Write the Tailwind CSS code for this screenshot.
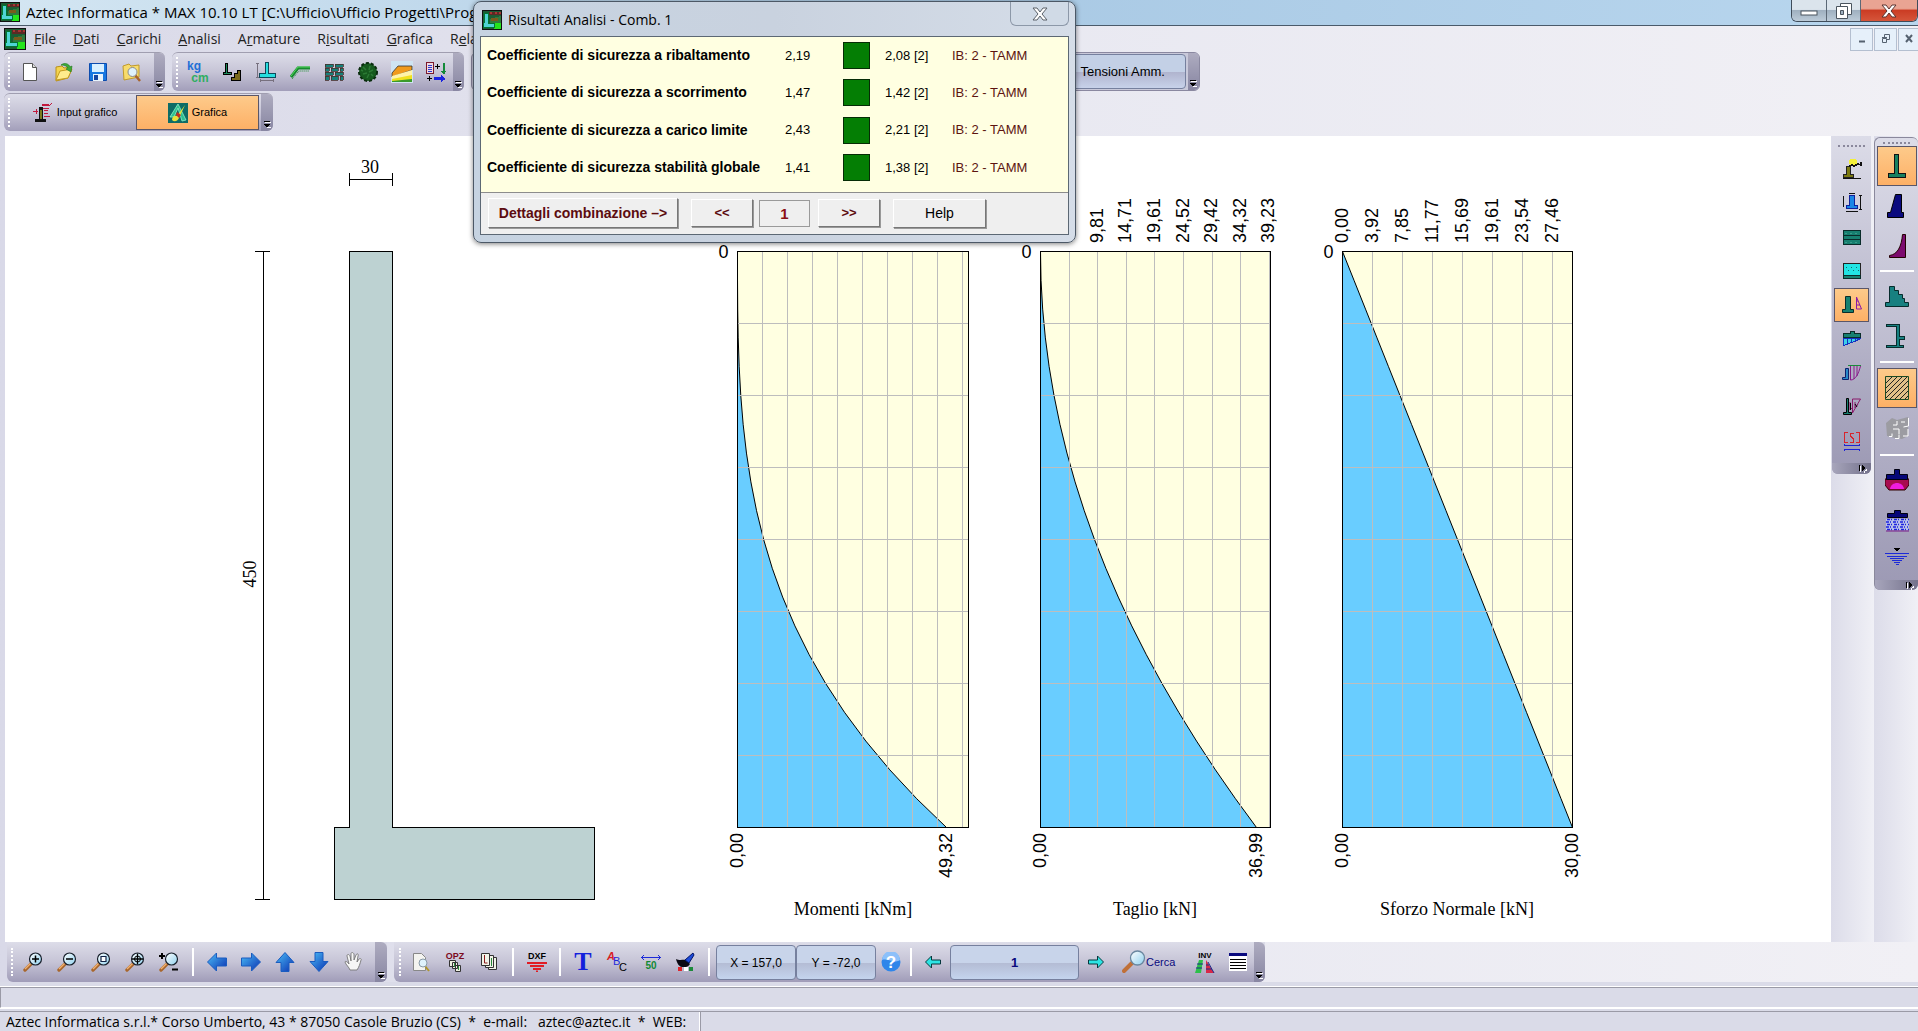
<!DOCTYPE html>
<html lang="it">
<head>
<meta charset="utf-8">
<title>Aztec Informatica * MAX 10.10 LT</title>
<script src="https://cdn.jsdelivr.net/npm/@tailwindcss/browser@4"></script>
</head>
<body class="relative flex min-h-screen flex-col overflow-x-hidden bg-linear-to-r from-[#d9d9e8] via-[#e8e8f1] to-[#f1f0f5] font-['Liberation_Sans',sans-serif] text-[13px] text-black">

<svg class="absolute size-0" aria-hidden="true">
  <defs>
    <symbol id="app" viewBox="0 0 20 20" shape-rendering="crispEdges">
      <rect width="20" height="20" fill="#111"/><rect x="1" y="1" width="18" height="18" fill="#1c5c34"/>
      <rect x="7" y="2" width="12" height="3" fill="#5b2a24"/><path d="M8 2h2v2h-2zM13 2h2v2h-2zM17 2h2v2h-2z" fill="#a33"/>
      <path d="M8 9l11-3v7H8z" fill="#2f7a3c"/><path d="M9 8h7v3h-7z" fill="#7a5a1c"/>
      <rect x="12" y="13" width="7" height="6" fill="#25e41c"/>
      <path d="M2 3h4v10h6v4H1V14l1-1z" fill="#4fd4d4" stroke="#073" stroke-width="1"/>
    </symbol>
    <symbol id="more" viewBox="0 0 9 9" shape-rendering="crispEdges">
      <path d="M2 2h6v1H2zM3 7h5v1H5v1z" fill="#fff"/><path d="M1 1h6v1H1zM1 4h6v1H6v1H5v1H3V6H2V5H1z"/>
    </symbol>
    <symbol id="moreside" viewBox="0 0 9 9" shape-rendering="crispEdges">
      <path d="M2 2h1v6H2zM6 7h1v-1h1v-1h1v2h-2v2h-1z" fill="#fff"/><path d="M1 1h1v6H1zM4 1h1v1h1v1h1v2H6v1H5v1H4z"/>
    </symbol>
    <linearGradient id="blu" x1="0" y1="0" x2="1" y2="1"><stop offset="0" stop-color="#4cc0f8"/><stop offset="1" stop-color="#0a2fb0"/></linearGradient>
    <linearGradient id="lens" x1="0" y1="0" x2="1" y2="1"><stop offset="0" stop-color="#fff"/><stop offset="1" stop-color="#8fd0ee"/></linearGradient>
    <symbol id="mag" viewBox="0 0 20 20">
      <path d="M2 18l7-7" stroke="#a8662c" stroke-width="3.4" stroke-linecap="round"/><path d="M2 17l6-6" stroke="#f0b070" stroke-width="1.4"/>
      <circle cx="12.500" cy="7" r="6" fill="url(#lens)" stroke="#18202c" stroke-width="1.2"/>
    </symbol>
  </defs>
</svg>

<!-- Title bar -->
<header class="flex h-[26px] items-start justify-between border-b border-[#4a5a6a] bg-linear-to-r from-[#d4e6f2] via-[#a9c9e4] to-[#b8d6ee]">
  <div class="flex items-center gap-1.5 pt-0.5">
    <svg class="size-5"><use href="#app"/></svg>
    <h1 class="whitespace-nowrap font-['Open_Sans',sans-serif] text-[15px] leading-5">Aztec Informatica * MAX 10.10 LT [C:\Ufficio\Ufficio Progetti\Progetti</h1>
  </div>
  <div class="flex h-[22px] overflow-hidden rounded-b-md border border-t-0 border-[#3f4c5a]">
    <button aria-label="Riduci a icona" class="flex w-[35px] items-center justify-center border-r border-[#5b6876] bg-linear-to-b from-[#dbe4ec] from-45% via-[#9fb0c0] via-50% to-[#bccbd8]"><svg class="size-[18px]"><rect x="1" y="9" width="16" height="4" fill="#fff" stroke="#4a545e"/></svg></button>
    <button aria-label="Ripristina" class="flex w-[34px] items-center justify-center border-r border-[#5b6876] bg-linear-to-b from-[#dbe4ec] from-45% via-[#9fb0c0] via-50% to-[#bccbd8]"><svg class="size-[18px]" fill="#fff" stroke="#4a545e"><path d="M5.500 1.500h11v11h-11z"/><path d="M1.500 4.500h11v12h-11z"/><path d="M5.500 8.500h3v4h-3z" fill="#9fb0c0"/></svg></button>
    <button aria-label="Chiudi" class="flex w-[56px] items-center justify-center bg-linear-to-b from-[#e9a493] from-40% via-[#cb3c24] via-50% to-[#d5553a]"><svg class="h-4 w-[18px]" viewBox="0 0 18 16"><path d="M2 2h4l3 4 3-4h4l-5 6 5 6h-4l-3-4-3 4H2l5-6z" fill="#fff" stroke="#5c3430"/></svg></button>
  </div>
</header>

<!-- Menu bar -->
<nav class="flex h-[26px] items-center justify-between font-['Open_Sans',sans-serif] text-[14px] text-[#222]">
  <div class="flex items-center whitespace-nowrap pl-1">
    <svg class="size-[22px]"><use href="#app"/></svg>
    <div class="flex gap-[17px] pl-2 leading-5">
      <a href="#"><u>F</u>ile</a><a href="#"><u>D</u>ati</a><a href="#"><u>C</u>arichi</a><a href="#"><u>A</u>nalisi</a><a href="#">A<u>r</u>mature</a><a href="#">R<u>i</u>sultati</a><a href="#"><u>G</u>rafica</a><a href="#">R<u>e</u>lazione</a>
    </div>
  </div>
  <div class="flex gap-px">
    <button aria-label="Riduci finestra" class="flex h-[23px] w-[23px] items-center justify-center border border-[#b4bfd0] bg-[#e6f0fa]"><svg class="size-3"><path d="M3 8.500h6" stroke="#566270" stroke-width="2"/></svg></button>
    <button aria-label="Ripristina finestra" class="flex h-[23px] w-[23px] items-center justify-center border border-[#b4bfd0] bg-[#e6f0fa]"><svg class="size-3" fill="none" stroke="#566270"><path d="M4.500 4V1.500h5v5H7M2.500 5.500h4v4h-4zM2 4.500h5"/></svg></button>
    <button aria-label="Chiudi finestra" class="flex h-[23px] w-[20px] items-center justify-center border border-r-0 border-[#b4bfd0] bg-[#e6f0fa]"><svg class="size-3"><path d="M3 2l6 7M9 2l-6 7" stroke="#566270" stroke-width="2"/></svg></button>
  </div>
</nav>

<!-- Tool bars -->
<div class="flex h-[39px] gap-[7px] pl-1">
  <div class="flex w-[161px] overflow-hidden rounded-md border-t border-[#a09eb0] bg-linear-to-b from-[#dddde9] via-[#c6c4d6] to-[#a29eba]">
    <span class="my-1 ml-1 w-[5px] border-l-2 border-dotted border-white"></span>
    <button aria-label="Nuovo" class="flex w-[34px] items-center justify-center"><svg class="size-5"><path d="M3.500 1.500h9l4 4v13h-13z" fill="#fff" stroke="#555"/><path d="M12.500 1.500v4h4" fill="#ddd" stroke="#555"/></svg></button>
    <button aria-label="Apri" class="flex w-[34px] items-center justify-center"><svg class="size-5"><path d="M2 5l6-1 2 2 7-1v4l-3 7-12 3z" fill="#f4d44e" stroke="#b8901c"/><path d="M2 18l4-9 12-2-4 9z" fill="#ffec8c" stroke="#c49a20"/><path d="M7 3c4-3 8-1 9 2l2-1-1 6-5-3 2-1c-1-2-4-3-7-3z" fill="#3faa38" stroke="#1c7a24" stroke-width=".6"/></svg></button>
    <button aria-label="Salva" class="flex w-[34px] items-center justify-center"><svg class="size-5"><path d="M1.500 1.500h17v17h-17z" fill="#1878e0" stroke="#0c4cae"/><path d="M4 2h12v8H4z" fill="#d8f0ff"/><path d="M5 12h10v7H5z" fill="#e8f4fc"/><path d="M6 13h4v5H6z" fill="#1646a0"/></svg></button>
    <button aria-label="Cerca file" class="flex w-[34px] items-center justify-center"><svg class="size-5"><path d="M1 4l6-2 2 2 8-1v12l-15 3z" fill="#f8dc6c" stroke="#c09a2c"/><path d="M13 13l5 6" stroke="#a8642c" stroke-width="2.500"/><circle cx="10.500" cy="10" r="4.500" fill="#dff2fc" stroke="#8a8a8a"/></svg></button>
    <span class="ml-auto flex w-[11px] items-end justify-center bg-linear-to-b from-[#aeacc0] to-[#8886a2] pb-0.5"><svg class="size-[9px]"><use href="#more"/></svg></span>
  </div>
  <div class="flex w-[292px] overflow-hidden rounded-md border-t border-[#a09eb0] bg-linear-to-b from-[#dddde9] via-[#c6c4d6] to-[#a29eba]">
    <span class="my-1 ml-1 w-[5px] border-l-2 border-dotted border-white"></span>
    <button aria-label="Unità di misura" class="flex w-[34px] flex-col items-center justify-center text-[12px] leading-[12px] font-bold"><span class="pr-2 text-[#1f6fd6]">kg</span><span class="pl-1 text-[#2fae62]">cm</span></button>
    <button aria-label="Tipo muro" class="flex w-[34px] items-center justify-center"><svg class="size-5" stroke="#000" shape-rendering="crispEdges"><path d="M3.500 1.500h2v9h4v2h-8v-2h2z" fill="#1a8a5a"/><path d="M15.500 8.500h3v10h-9v-3h3v-4h3z" fill="#7a6a1c"/></svg></button>
    <button aria-label="Geometria" class="flex w-[34px] items-center justify-center"><svg class="size-5" shape-rendering="crispEdges"><path d="M9.500 .500h3v11h7v4h-16v-4h6z" fill="#27dede" stroke="#0b4a5a"/><path d="M1.500 1v15M0 1.500h3M0 15.500h3M4 18.500h14M4.500 17v3M17.500 17v3" stroke="#77707e"/></svg></button>
    <button aria-label="Profilo" class="flex w-[34px] items-center justify-center"><svg class="size-5"><path d="M1 15l7-9h12" fill="none" stroke="#168a2e" stroke-width="3"/><path d="M1 14l7-9h12" fill="none" stroke="#54d85e"/><path d="M2 17l7-8h10" fill="none" stroke="#168a2e" stroke-dasharray="1 1"/></svg></button>
    <button aria-label="Strati" class="flex w-[34px] items-center justify-center"><svg class="size-5" shape-rendering="crispEdges"><path d="M1 2h8v3H1zM11 2h8v3h-8zM1 6h4v3H1zM7 6h7v3H7zM16 6h3v3h-3zM1 10h8v3H1zM11 10h8v3h-8zM1 14h4v4H1zM7 14h7v4H7zM16 14h3v4h-3z" fill="#15807a" stroke="#46302c" stroke-width=".8"/></svg></button>
    <button aria-label="Vegetazione" class="flex w-[34px] items-center justify-center"><svg class="size-5"><circle cx="10" cy="10" r="9" fill="#165a1e" stroke="#0a2c0e" stroke-dasharray="3 2" stroke-width="2"/><path d="M5 5l3 3M12 4l-1 4M15 8l-4 2M5 12l4-1M9 16l2-4M15 14l-2-2M3 8l2 1" stroke="#2c7a34" stroke-width="1.500"/></svg></button>
    <button aria-label="Terreno" class="flex w-[34px] items-center justify-center"><svg class="size-[22px]"><path d="M0 0h22v22H0z" fill="#cfe4f2"/><path d="M1 12l6-7h14v4L1 16z" fill="#f09a1c" stroke="#333" stroke-width=".8"/><path d="M1 15l20-6v6L1 18z" fill="#fff3a8"/><path d="M1 18l20-4v6H1z" fill="#f2e21e"/><path d="M1 20l20-2v3H1z" fill="#3b9a2c"/></svg></button>
    <button aria-label="Carichi" class="flex w-[34px] items-center justify-center"><svg class="size-5" shape-rendering="crispEdges"><path d="M.5 .5h7v11h-7z" fill="#f2d8e0" stroke="#7a1a2c"/><path d="M2 3h4M2 5h4M2 7h4M2 9h4" stroke="#2a3ad0"/><path d="M9 4.500h5M11.500 2v5M1 16.500h5M3.500 14v5" stroke="#000"/><path d="M17 1v8h-2l3 4 2-4h-1V1z" fill="#138a3a"/><path d="M8 15h7v-2l5 4-5 3v-2H8z" fill="#1a22e0"/></svg></button>
    <span class="ml-auto flex w-[11px] items-end justify-center bg-linear-to-b from-[#aeacc0] to-[#8886a2] pb-0.5"><svg class="size-[9px]"><use href="#more"/></svg></span>
  </div>
  <div class="flex w-[729px] justify-end overflow-hidden rounded-md border border-[#8a88a0] bg-[#c9c9da]">
    <button class="my-px mr-0.5 w-[200px] rounded-sm border border-[#76809e] bg-linear-to-b from-[#c3d0e6] from-50% via-[#b0b4ce] via-52% to-[#c8d2ea] pr-5 text-right">Tensioni Amm.</button>
    <span class="flex w-[11px] items-end justify-center bg-linear-to-b from-[#aeacc0] to-[#8886a2] pb-0.5"><svg class="size-[9px]"><use href="#more"/></svg></span>
  </div>
</div>
<div class="flex pt-0.5 pb-[5px] pl-1">
  <div class="flex h-[38px] w-[269px] overflow-hidden rounded-md border-t border-[#a09eb0] bg-linear-to-b from-[#dddde9] via-[#c6c4d6] to-[#a29eba] text-[11px]">
    <span class="my-1 ml-1 w-[6px] border-l-2 border-dotted border-white"></span>
    <button class="flex w-[122px] items-center justify-center gap-1"><svg class="size-5" shape-rendering="crispEdges"><path d="M6 4h4v12h3v3H2v-3h4z" fill="#111"/><path d="M7 7h2v9H7z" fill="#7a7a1c"/><path d="M9 1h7v2H9zM0 8h5M11 7h4v1h-4zM11 10h4v1h-4zM11 13h6v1h-6z" fill="#c2183c"/><path d="M0 8.500h5M3 6v5M10 5.500h6M19 0l-3 3" stroke="#c2183c"/></svg>Input grafico</button>
    <button class="my-px flex w-[123px] items-center justify-center gap-1 border border-[#5a5668] bg-linear-to-b from-[#fdca8a] to-[#fdb066]"><svg class="size-5"><path d="M0 0h20v20H0z" fill="#0e6c66"/><path d="M10 1L2 14h4l4-9 4 13 4-1z" fill="#2fc090" stroke="#8ff0c8" stroke-width=".8"/><path d="M4 17c0-4 3-5 5-4l8-11-6 13c-2 4-5 4-7 2z" fill="#e8e03a"/><path d="M9 9l4 3-2 3-3-3z" fill="#c03020"/></svg>Grafica</button>
    <span class="ml-auto flex w-[12px] items-end justify-center bg-linear-to-b from-[#aeacc0] to-[#8886a2] pb-0.5"><svg class="size-[9px]"><use href="#more"/></svg></span>
  </div>
</div>

<!-- Drawing area -->
<main class="flex flex-1">
  <div class="min-w-0 flex-1 pl-[5px]">
    <svg class="block h-full w-full bg-white" viewBox="5 136 1826 806" role="img" aria-label="Diagrammi delle sollecitazioni">
      <g stroke="#000" fill="none" shape-rendering="crispEdges">
        <path d="M349.500 251.500h43v576h202v72h-260v-72h15z" fill="#bdd2d2"/>
        <path d="M263.500 251.500v648M255 251.500h15M255 899.500h15M349.500 179.500h43M349.500 173v13M392.500 173v13"/>
      </g>
      <g font-family="'Liberation Serif',serif" font-size="18" text-anchor="middle">
        <text x="370" y="173">30</text>
        <text transform="translate(256 574) rotate(-90)">450</text>
        <text x="853" y="915">Momenti [kNm]</text><text x="1155" y="915">Taglio [kN]</text><text x="1457" y="915">Sforzo Normale [kN]</text>
      </g>
      <g id="charts" font-family="'Liberation Sans',sans-serif" font-size="18"></g>
    </svg>
  </div>
  <aside class="w-[43px] shrink-0 bg-linear-to-r from-[#dcdce9] to-[#f0f0f6]">
    <div class="ml-px flex h-[338px] w-[39px] flex-col items-center overflow-hidden rounded-b-md bg-linear-to-b from-[#dcdce8] to-[#9c99b4]">
      <span class="mt-[9px] h-[7px] w-[27px] shrink-0 border-t-2 border-dotted border-[#8a889c]"></span>
      <button aria-label="Sisma" class="flex h-[34px] w-[35px] items-center justify-center"><svg class="size-5" shape-rendering="crispEdges"><circle cx="11" cy="3" r="4" fill="#f4f03a"/><path d="M4 7h4v8h3v3H1v-3h3z" fill="#7c7a12" stroke="#222"/><path d="M7 7l3-1 2 1 4-2 3 1v-3M1 19.500h18" stroke="#111" stroke-width="1.500" fill="none"/></svg></button>
      <button aria-label="Quote" class="flex h-[34px] w-[35px] items-center justify-center"><svg class="size-5" shape-rendering="crispEdges"><path d="M7.500 2.500h5v10h3v3h-11v-3h3z" fill="#1a86e6" stroke="#10209c"/><path d="M1.500 3v11M18.500 2v15M17 2.500h3M17 16.500h3M7 .5h6M4 18.500h12" stroke="#111"/></svg></button>
      <button aria-label="Armatura" class="flex h-[34px] w-[35px] items-center justify-center"><svg class="size-5" shape-rendering="crispEdges"><path d="M1.500 3.500h17v14h-17zM1 8.500h18M1 12.500h18" fill="#178070" stroke="#0a2c2a"/><path d="M3 6h14M3 15h14" stroke="#3a9a8a" stroke-dasharray="2 3"/></svg></button>
      <button aria-label="Strato" class="flex h-[34px] w-[35px] items-center justify-center"><svg class="size-5" shape-rendering="crispEdges"><path d="M1.500 2.500h17v15h-17z" fill="#22e4e4" stroke="#222"/><path d="M1.500 14.500h17v3h-17z" fill="#178070" stroke="#0a2c2a"/><path d="M4 6h12M6 9h12" stroke="#176a70" stroke-dasharray="1 4"/></svg></button>
      <button aria-label="Sollecitazioni" class="flex h-[34px] w-[35px] items-center justify-center border border-[#5a5668] bg-linear-to-b from-[#fdca8a] to-[#fdb066]"><svg class="size-5"><path d="M3.500 1.500h5v13h3v3h-11v-3h3z" fill="#178070" stroke="#0a2c2a"/><path d="M14.500 2v12h5zM14 6h2M14 10h4" fill="none" stroke="#8a1aa8"/></svg></button>
      <button aria-label="Fondazione" class="flex h-[34px] w-[35px] items-center justify-center"><svg class="size-5" shape-rendering="crispEdges"><path d="M1.500 4.500h7v-2h4v2h6v4h-17z" fill="#178070" stroke="#0a2c2a"/><path d="M1.500 9.500h17l-6 3-11 4z" fill="#3ad0e8" stroke="#1430c0"/><path d="M5 10v5M9 10v4M13 10v3" stroke="#1430c0"/></svg></button>
      <button aria-label="Taglio" class="flex h-[34px] w-[35px] items-center justify-center"><svg class="size-5"><path d="M3.500 5.500h3v11h-6v-2h3z" fill="#2a8ac8" stroke="#10206c"/><path d="M8.500 3v14c5 0 8-6 10-14M12 3v13M15 3v10" fill="none" stroke="#8a1a8a"/><path d="M6 2.500h13" stroke="#1a8a3a"/></svg></button>
      <button aria-label="Momento" class="flex h-[34px] w-[35px] items-center justify-center"><svg class="size-5"><path d="M4.500 1.500h2v14h3v2h-8v-2h3z" fill="#178070" stroke="#000"/><path d="M10.500 2v14l8-14zM8 5v8l3-3M13 5v6l3-4" fill="none" stroke="#8a1a6a"/><path d="M8.500 6v7M13 7l2 3" stroke="#000"/></svg></button>
      <button aria-label="Sezione" class="flex h-[34px] w-[35px] items-center justify-center"><svg class="size-5" fill="none" shape-rendering="crispEdges"><path d="M6 1.500H2.500v10H6M14 1.500h3.500v10H14M12 2H8.500v3l3 3v3H8" stroke="#d8242c"/><path d="M3 14.500h14M3 18.500h14M2.500 13v2M17.500 13v2M2.500 18v2M17.500 18v2" stroke="#1a22d8"/></svg></button>
      <span class="mt-auto flex h-[11px] w-full shrink-0 items-center justify-end bg-linear-to-r from-[#a8a6bc] to-[#74728c] pr-1"><svg class="size-[9px]"><use href="#moreside"/></svg></span>
    </div>
  </aside>
  <aside class="w-[44px] shrink-0 bg-linear-to-r from-[#dcdce9] to-[#f0f0f6] pt-px">
    <div class="flex h-[453px] flex-col items-center overflow-hidden rounded-md border-t border-l border-[#8a889c] bg-linear-to-b from-[#dcdce8] to-[#9c99b4]">
      <span class="mt-1 h-1 w-[27px] shrink-0 border-t-2 border-dotted border-[#8a889c]"></span>
      <button aria-label="Muro a mensola" class="flex h-10 w-10 items-center justify-center border border-[#5a5668] bg-linear-to-b from-[#fdca8a] to-[#fdb066]"><svg class="size-6" shape-rendering="crispEdges"><path d="M9.500 .5h4v19h7v4h-17v-4h6z" fill="#178060" stroke="#111"/></svg></button>
      <button aria-label="Muro a gravità" class="flex h-10 w-10 items-center justify-center"><svg class="size-6"><path d="M10.500 .5h6v18h2v5h-16v-5h3z" fill="#0a0a7e" stroke="#000"/></svg></button>
      <button aria-label="Muro curvo" class="flex h-10 w-10 items-center justify-center"><svg class="size-6"><path d="M17.500 .5h3v23h-16v-2c8-1 12-9 13-21z" fill="#7c0a6e" stroke="#200"/></svg></button>
      <span class="my-1 h-0.5 w-[34px] shrink-0 bg-white"></span>
      <button aria-label="Muro a gradoni" class="flex h-10 w-10 items-center justify-center"><svg class="size-6"><path d="M4.500 2.500h5v4h4v4h4v4h2v4h4v4h-23v-4h4z" fill="#178080" stroke="#062c2c"/></svg></button>
      <button aria-label="Muro con mensola" class="flex h-10 w-10 items-center justify-center"><svg class="size-6" shape-rendering="crispEdges"><path d="M1.500 .5h13v12h5v3h-5v6h4v2h-17v-2h10v-19h-10z" fill="#178080" stroke="#062c2c"/></svg></button>
      <span class="my-[5px] h-0.5 w-[34px] shrink-0 bg-white"></span>
      <button aria-label="Tratteggio" class="flex h-10 w-10 items-center justify-center border border-[#5a5668] bg-linear-to-b from-[#fdca8a] to-[#fdb066]"><svg class="size-6"><path d="M.5 .5h23v23H.5z" fill="#e2c088" stroke="#1c4a24"/><path d="M1 7l6-6M1 12L12 1M1 17L17 1M1 22L22 1M5 23L23 5M10 23l13-13M15 23l8-8M20 23l3-3" stroke="#222"/></svg></button>
      <button aria-label="Pietrame" class="flex h-10 w-10 items-center justify-center"><svg class="size-6"><path d="M1 7l6-5 5 2 11-3v19l-6 3-7-1-8-2z" fill="#9c9ca2"/><path d="M23.500 2v8l-5 1M12 5v4H8M8 13h6v5M23 13v7h-5M10 22.500h4v-4M16 6h4M4 20.500h3v-3" stroke="#fff" fill="none"/></svg></button>
      <span class="mt-1.5 mb-1 h-0.5 w-[34px] shrink-0 bg-white"></span>
      <button aria-label="Pressioni" class="flex h-10 w-10 items-center justify-center"><svg class="size-6"><path d="M0 11h24v6l-4 5H4l-4-5z" fill="#a80c50" stroke="#300"/><path d="M5 21c1-8 13-8 14 0z" fill="#f01ce0"/><path d="M1.500 6.500h8v-5h5v5h8v5h-21z" fill="#060678" stroke="#001"/></svg></button>
      <button aria-label="Terreno fondazione" class="flex h-10 w-10 items-center justify-center"><svg class="size-6"><path d="M1 11h23v11H1z" fill="#b8c0e8"/><path d="M2 11.500h22M1 14h22M2 16.500h22M1 19h22M2 21.500h22" fill="none" stroke="#1c22e0" stroke-width="1.500" stroke-dasharray="3 1 1 2"/><path d="M2.500 5.500h7v-3h6v3h7v4h-20z" fill="#060678" stroke="#001"/><path d="M1 23h23" stroke="#7a1a8a"/></svg></button>
      <button aria-label="Falda" class="flex h-[34px] w-10 items-center justify-center"><svg class="size-6" shape-rendering="crispEdges"><path d="M9 3h6l-3 4z"/><path d="M0 8.500h24M2 11.500h20M5 13.500h14M7 15.500h10M9 17.500h6M11 19.500h3" stroke="#1c2ad8" stroke-width="1.400"/></svg></button>
      <span class="mt-auto flex h-[10px] w-full shrink-0 items-center justify-end bg-linear-to-r from-[#a8a6bc] to-[#74728c] pr-1"><svg class="size-[9px]"><use href="#moreside"/></svg></span>
    </div>
  </aside>
</main>

<!-- Bottom tool bars -->
<div class="flex h-10 gap-[7px] pl-[7px]">
  <div class="flex w-[380px] overflow-hidden rounded-b-md bg-linear-to-b from-[#dddde9] via-[#c6c4d6] to-[#a09cb8]">
    <span class="my-1.5 ml-1 w-[5px] shrink-0 border-l-2 border-dotted border-white"></span>
    <button aria-label="Zoom avanti" class="flex w-[34px] items-center justify-center"><svg class="size-5"><use href="#mag"/><path d="M9 7h7M12.500 3.500v7" stroke="#000" stroke-width="1.500"/></svg></button>
    <button aria-label="Zoom indietro" class="flex w-[34px] items-center justify-center"><svg class="size-5"><use href="#mag"/><path d="M9 7h7" stroke="#000" stroke-width="1.500"/></svg></button>
    <button aria-label="Zoom finestra" class="flex w-[34px] items-center justify-center"><svg class="size-5"><use href="#mag"/><path d="M10 4.500h5v5h-5z" fill="#fff" stroke="#124" stroke-width="1.200"/></svg></button>
    <button aria-label="Zoom tutto" class="flex w-[34px] items-center justify-center"><svg class="size-5"><use href="#mag"/><path d="M7 7h11M12.500 1.500v11" stroke="#000" stroke-width="1.300"/><circle cx="12.500" cy="7" r="3" fill="none" stroke="#000"/></svg></button>
    <button aria-label="Zoom dinamico" class="flex w-[34px] items-center justify-center"><svg class="size-5"><use href="#mag"/><path d="M0 4h6M3 1v6M13 17.500h6" stroke="#000" stroke-width="2"/></svg></button>
    <span class="mx-[6px] my-1.5 w-0.5 shrink-0 bg-white"></span>
    <button aria-label="Sinistra" class="flex w-[34px] items-center justify-center"><svg class="size-5"><path d="M.5 10l9-9v5h10v8h-10v5z" fill="url(#blu)" stroke="#1a5cc0"/></svg></button>
    <button aria-label="Destra" class="flex w-[34px] items-center justify-center"><svg class="size-5"><path d="M19.500 10l-9-9v5H.5v8h10v5z" fill="url(#blu)" stroke="#1a5cc0"/></svg></button>
    <button aria-label="Su" class="flex w-[34px] items-center justify-center"><svg class="size-5"><path d="M10 .5l9 10h-5v9H6v-9H1z" fill="url(#blu)" stroke="#1a5cc0"/></svg></button>
    <button aria-label="Giù" class="flex w-[34px] items-center justify-center"><svg class="size-5"><path d="M10 19.500l9-10h-5v-9H6v9H1z" fill="url(#blu)" stroke="#1a5cc0"/></svg></button>
    <button aria-label="Mano" class="flex w-[34px] items-center justify-center"><svg class="size-5"><path d="M7 18c-1-3-4-5-5-8 0-1 2-1 4 2L4 4c0-2 2-2 3 0l1 5V2c0-2 2-2 3 0v6l2-5c1-2 3-1 2 1l-1 6 2-3c1-1 3 0 2 1-1 4-2 7-4 10z" fill="#f6f6f6" stroke="#777" stroke-width=".9"/></svg></button>
    <span class="ml-auto flex w-[12px] items-end justify-center rounded-tr-md bg-linear-to-b from-[#aeacc0] to-[#8886a2] pb-0.5"><svg class="size-[9px]"><use href="#more"/></svg></span>
  </div>
  <div class="flex w-[871px] overflow-hidden rounded-b-md bg-linear-to-b from-[#dddde9] via-[#c6c4d6] to-[#a09cb8]">
    <span class="my-1.5 ml-[5px] w-[5px] shrink-0 border-l-2 border-dotted border-white"></span>
    <button aria-label="Anteprima" class="flex w-[34px] items-center justify-center"><svg class="size-5"><path d="M2.500 1.500h8l4 4v13h-12z" fill="#f4f4f0" stroke="#888"/><path d="M14 14l4 5" stroke="#b0962c" stroke-width="2"/><circle cx="12" cy="11" r="4" fill="#dff2fc" stroke="#8a9aa8"/></svg></button>
    <button aria-label="Opzioni" class="flex w-[34px] flex-col items-center justify-center text-[9px] leading-[8px] font-bold text-[#7c0a1c]">OPZ<svg class="h-3 w-4" fill="#eef0e0" stroke="#333" viewBox="0 0 16 12"><path d="M2.500 .5h6v6h-6zM5.500 2.500h5v6h-5zM8.500 5.500h5v6h-5z"/><path d="M7.500 3v4M11.500 6v4" stroke="#2a8a3a"/></svg></button>
    <button aria-label="Pagine" class="flex w-[34px] items-center justify-center"><svg class="size-5" fill="#f2f4e8" stroke="#333"><path d="M9.500 5.500h8v12h-8z"/><path d="M6.500 3.500h8v12h-8z"/><path d="M2.500 1.500h8v12h-8z"/><path d="M5.500 3v8h3" fill="none" stroke="#8a1a1c"/><path d="M12.500 6v8" stroke="#2a8a3a"/></svg></button>
    <span class="mx-[6px] my-1.5 w-0.5 shrink-0 bg-white"></span>
    <button aria-label="Esporta DXF" class="flex w-[34px] flex-col items-center justify-center text-[9px] leading-[9px] font-bold">DXF<svg class="h-[11px] w-5" stroke="#e01c24" stroke-width="2"><path d="M0 2h20M3 5h14M6 8h8M9 10.500h2"/></svg></button>
    <span class="mx-[5px] my-1.5 w-0.5 shrink-0 bg-white"></span>
    <button aria-label="Testo" class="w-[34px] text-center font-['Liberation_Serif',serif] text-[26px] leading-9 font-bold text-[#1220dc]">T</button>
    <button aria-label="Caratteri" class="flex w-[34px] items-center justify-center"><svg class="size-5 overflow-visible" font-family="'Liberation Sans',sans-serif" font-size="11"><text x="0" y="8" fill="#d81c24" font-style="italic" font-weight="bold">A</text><text x="6" y="13" fill="#1c2ad8">B</text><text x="12" y="19">C</text></svg></button>
    <button aria-label="Quotatura" class="flex w-[34px] flex-col items-center justify-center text-[10px] leading-[10px] font-bold text-[#128a34]"><svg class="h-2 w-5" stroke="#1c2ad8" viewBox="0 0 20 8"><path d="M0 4.500h20M3 2L.5 4.500 3 7M17 2l2.500 2.500L17 7" fill="none"/></svg>50</button>
    <button aria-label="Colori" class="flex w-[34px] items-center justify-center"><svg class="size-5"><path d="M1 7c4 2 8 0 10 1l4 4c-2 4-6 3-8 3s-5-3-6-8z" fill="#0a0a14"/><path d="M10 8l8-7 1 2-5 8z" fill="#1c4ad8" stroke="#016"/><path d="M3 15h4v4H3z" fill="#e0242c"/><path d="M9 15h4v4H9z" fill="#fff"/><path d="M14 15h4v4h-4z" fill="#1c8a3a"/></svg></button>
    <span class="mx-[6px] my-1.5 w-0.5 shrink-0 bg-white"></span>
    <button class="mt-[3px] mb-0.5 w-20 shrink-0 rounded-sm border border-[#76809e] bg-linear-to-b from-[#c8d4ea] from-50% via-[#b4bcd4] via-52% to-[#c4d4ee] text-[12px]">X = 157,0</button>
    <button class="mt-[3px] mb-0.5 w-20 shrink-0 rounded-sm border border-[#76809e] bg-linear-to-b from-[#c8d4ea] from-50% via-[#b4bcd4] via-52% to-[#c4d4ee] text-[12px]">Y = -72,0</button>
    <button aria-label="Guida" class="flex w-[30px] items-center justify-center"><svg class="size-5"><circle cx="10" cy="10" r="9.500" fill="#2f86ea"/><path d="M1 8a9 9 0 0 1 18 0c-5 4-12-2-18 0z" fill="#8cc0fa"/><text x="10" y="16" text-anchor="middle" font-family="'Liberation Sans',sans-serif" font-size="17" font-weight="bold" fill="#fff">?</text></svg></button>
    <span class="mx-1 my-1.5 w-0.5 shrink-0 bg-white"></span>
    <button aria-label="Precedente" class="flex w-[34px] items-center justify-center"><svg class="h-[14px] w-4"><path d="M.5 7l6-6v4h9v4h-9v4z" fill="#2ce4e4" stroke="#06383c"/></svg></button>
    <input aria-label="Combinazione" value="1" readonly class="mt-[3px] mb-0.5 w-[129px] shrink-0 rounded-sm border border-[#76809e] bg-linear-to-b from-[#c8d4ea] from-50% via-[#b4bcd4] via-52% to-[#c4d4ee] text-center text-[13px] font-bold text-[#0a0a7e]">
    <button aria-label="Successiva" class="flex w-[34px] items-center justify-center"><svg class="h-[14px] w-4"><path d="M15.500 7l-6-6v4h-9v4h9v4z" fill="#2ce4e4" stroke="#06383c"/></svg></button>
    <button class="ml-[5px] flex w-[70px] shrink-0 items-center pl-1 text-[11px] text-[#0a0a7e]"><svg class="size-6" viewBox="0 0 24 24"><path d="M2 21l8-8" stroke="#c07038" stroke-width="4" stroke-linecap="round"/><circle cx="15.500" cy="8" r="7" fill="url(#lens)" stroke="#6a88a0" stroke-width="1.300"/></svg>Cerca</button>
    <button aria-label="Inviluppo" class="flex w-[34px] shrink-0 flex-col items-center justify-center text-[8px] leading-[8px] font-bold">INV<svg class="h-[13px] w-5"><path d="M4 0h4L6 13H0z" fill="#2cc04a"/><path d="M11 0l8 13h-8z" fill="#d82848"/><path d="M2 4h6M1 8h6M11 5h3M11 9h6M13 2l6 11" stroke="#1a2a8a"/></svg></button>
    <button aria-label="Elenco" class="flex w-8 shrink-0 items-center justify-center"><svg class="size-[18px]" shape-rendering="crispEdges"><path d="M0 0h18v18H0z" fill="#fff"/><path d="M0 0h18v3H0z" fill="#0a0a7e"/><path d="M1 6.500h16M1 9.500h16M1 12.500h16M1 15.500h16" stroke="#000"/></svg></button>
    <span class="ml-auto flex w-[11px] shrink-0 items-end justify-center rounded-tr-md bg-linear-to-b from-[#aeacc0] to-[#8886a2] pb-0.5"><svg class="size-[9px]"><use href="#more"/></svg></span>
  </div>
</div>

<!-- Status bars -->
<footer class="bg-[#dadbe8] pt-[5px]">
  <div class="h-[21px] border-t border-b border-l border-t-[#9a9aa6] border-b-white border-l-[#9a9aa6] ring-1 ring-white"></div>
  <div class="mt-[3px] flex h-5 border-t border-[#9a9aa6] font-['Open_Sans',sans-serif] text-[14px] leading-5 whitespace-pre">
    <p class="w-[700px] border-r border-white pl-1.5">Aztec Informatica s.r.l.* Corso Umberto, 43 * 87050 Casole Bruzio (CS)  *  e-mail:   aztec@aztec.it  *  WEB:</p>
    <p class="flex-1 border-l border-[#9a9aa6]"></p>
  </div>
</footer>

<!-- Results dialog, floating over the main window -->
<section role="dialog" aria-labelledby="dlg" class="absolute top-px left-[473px] flex h-[242px] w-[603px] flex-col rounded-lg border border-[#4c5866] bg-linear-to-r from-[#c6d3e1] via-[#c9d2df] to-[#d5dde8] px-1.5 pb-[7px] shadow-[0_1px_5px_rgba(0,0,0,0.5)]">
  <div class="flex h-[34px] items-start justify-between">
    <div class="flex items-center gap-1.5 pt-2 pl-0.5"><svg class="size-5"><use href="#app"/></svg><h2 id="dlg" class="font-['Open_Sans',sans-serif] text-[14px] leading-5">Risultati Analisi - Comb. 1</h2></div>
    <button aria-label="Chiudi risultati" class="flex h-6 w-[59px] items-center justify-center rounded-b-md border border-t-0 border-[#8c98a8] bg-[#d0dae6]"><svg class="h-4 w-[18px]" viewBox="0 0 18 16"><path d="M2 2h4l3 4 3-4h4l-5 6 5 6h-4l-3-4-3 4H2l5-6z" fill="#fff" stroke="#5a6068"/></svg></button>
  </div>
  <div class="flex flex-1 flex-col border border-[#5c6874] bg-[#efefef]">
    <div class="h-[156px] border-b border-[#8c8c8c] bg-[#ffffe1]">
      <table class="table-fixed text-left">
        <colgroup><col class="w-[304px]"><col class="w-[58px]"><col class="w-[42px]"><col class="w-[67px]"><col class="w-[110px]"></colgroup>
        <tbody>
          <tr class="h-[37px]"><th class="pl-1.5 text-[14px] whitespace-nowrap">Coefficiente di sicurezza a ribaltamento</th><td>2,19</td><td><div class="h-[27px] w-[27px] border border-[#062c06] bg-[#047e04]"></div></td><td>2,08 [2]</td><td class="text-[#5c1410]">IB: 2 - TAMM</td></tr>
          <tr class="h-[37px]"><th class="pl-1.5 text-[14px] whitespace-nowrap">Coefficiente di sicurezza a scorrimento</th><td>1,47</td><td><div class="h-[27px] w-[27px] border border-[#062c06] bg-[#047e04]"></div></td><td>1,42 [2]</td><td class="text-[#5c1410]">IB: 2 - TAMM</td></tr>
          <tr class="h-[38px]"><th class="pl-1.5 text-[14px] whitespace-nowrap">Coefficiente di sicurezza a carico limite</th><td>2,43</td><td><div class="h-[27px] w-[27px] border border-[#062c06] bg-[#047e04]"></div></td><td>2,21 [2]</td><td class="text-[#5c1410]">IB: 2 - TAMM</td></tr>
          <tr class="h-[37px]"><th class="pl-1.5 text-[14px] whitespace-nowrap">Coefficiente di sicurezza stabilità globale</th><td>1,41</td><td><div class="h-[27px] w-[27px] border border-[#062c06] bg-[#047e04]"></div></td><td>1,38 [2]</td><td class="text-[#5c1410]">IB: 2 - TAMM</td></tr>
        </tbody>
      </table>
    </div>
    <div class="flex items-center pt-[5px] pl-[7px]">
      <button class="h-[30px] w-[190px] border border-t-white border-r-[#777] border-b-[#777] border-l-white bg-[#efefef] text-[14px] font-bold whitespace-nowrap text-[#5c0c10] shadow-[1px_1px_0_#999]">Dettagli combinazione –&gt;</button>
      <button class="ml-[13px] h-7 w-[62px] border border-t-white border-r-[#777] border-b-[#777] border-l-white bg-[#efefef] font-bold text-[#5c0c10] shadow-[1px_1px_0_#999]">&lt;&lt;</button>
      <input aria-label="Numero combinazione" value="1" readonly class="ml-1.5 h-[27px] w-[51px] border border-[#9a9a9a] bg-[#efefef] text-center text-[15px] font-bold text-[#8c1014]">
      <button class="ml-2 h-7 w-[62px] border border-t-white border-r-[#777] border-b-[#777] border-l-white bg-[#efefef] font-bold text-[#5c0c10] shadow-[1px_1px_0_#999]">&gt;&gt;</button>
      <button class="ml-[13px] h-[29px] w-[93px] border border-t-white border-r-[#777] border-b-[#777] border-l-white bg-[#efefef] text-[14px] shadow-[1px_1px_0_#999]">Help</button>
    </div>
  </div>
</section>

<script>
  // Internal force diagrams along the stem: x follows (depth)^power up to the peak value.
  const TOP = 251.5, HEIGHT = 576;
  const charts = [
    { x: 737.5, width: 231, reach: 209, power: 3, step: 25, peak: '49,32', labels: [] },
    { x: 1040.5, width: 230, reach: 216, power: 2, step: 28.6, peak: '36,99', labels: ['', '', '9,81', '14,71', '19,61', '24,52', '29,42', '34,32', '39,23'] },
    { x: 1342.5, width: 230, reach: 230, power: 1, step: 30, peak: '30,00', labels: ['0,00', '3,92', '7,85', '11,77', '15,69', '19,61', '23,54', '27,46'] }
  ];
  const vertical = (x, y, text, anchor) =>
    `<text transform="translate(${x} ${y}) rotate(-90)" text-anchor="${anchor}">${text}</text>`;
  document.getElementById('charts').innerHTML = charts.map(c => {
    const bottom = TOP + HEIGHT;
    let curve = '', grid = '';
    for (let i = 0; i <= 20; i++) curve += `L${c.x + c.reach * (i / 20) ** c.power} ${TOP + HEIGHT * i / 20}`;
    for (let x = c.step; x < c.width; x += c.step) grid += `M${Math.floor(c.x + x) + .5} ${TOP}v${HEIGHT}`;
    for (let i = 1; i < 8; i++) grid += `M${c.x} ${TOP + 72 * i}h${c.width}`;
    return `<rect x="${c.x}" y="${TOP}" width="${c.width}" height="${HEIGHT}" fill="#ffffe1"/>
      <path d="M${c.x} ${bottom}L${c.x} ${TOP}${curve}z" fill="#69cdff"/>
      <path d="M${c.x} ${TOP}${curve}" fill="none" stroke="#000"/>
      <path d="${grid}" stroke="#bdbdbd" shape-rendering="crispEdges"/>
      <rect x="${c.x}" y="${TOP}" width="${c.width}" height="${HEIGHT}" fill="none" stroke="#000" shape-rendering="crispEdges"/>
      <text x="${c.x - 9}" y="258" text-anchor="end">0</text>
      ${c.labels.map((t, i) => t && vertical(c.x + c.step * i + 5, 243, t, 'start')).join('')}
      ${vertical(c.x + 5, 833, '0,00', 'end')}${vertical(c.x + c.reach + 5, 833, c.peak, 'end')}`;
  }).join('');
</script>
</body>
</html>
